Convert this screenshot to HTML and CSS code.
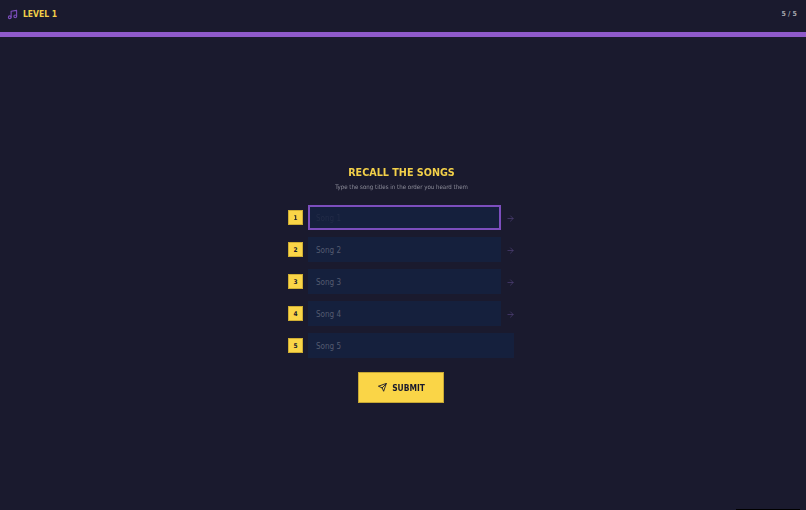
FILE: index.html
```html
<!DOCTYPE html>
<html lang="en">
<head>
<meta charset="utf-8">
<title>Recall the songs</title>
<link rel="stylesheet" href="styles.css">
</head>
<body>
<header class="topbar">
  <div class="level">
    <svg class="music" viewBox="0 0 24 24" fill="none" stroke="currentColor" stroke-width="2.4" stroke-linecap="round" stroke-linejoin="round"><path d="M9 18V5l12-2v13"/><circle cx="6" cy="18" r="3"/><circle cx="18" cy="16" r="3"/></svg>
    <span>LEVEL 1</span>
  </div>
  <div class="count">5 / 5</div>
</header>
<div class="progress"></div>
<main class="stage">
  <h1>RECALL THE SONGS</h1>
  <p class="sub">Type the song titles in the order you heard them</p>
  <div class="rows">
    <div class="row"><span class="num">1</span><div class="field focus">Song 1</div><svg class="arrow" viewBox="0 0 24 24" fill="none" stroke="currentColor" stroke-width="2" stroke-linecap="round" stroke-linejoin="round"><path d="M5 12h14M12 5l7 7-7 7"/></svg></div>
    <div class="row"><span class="num">2</span><div class="field">Song 2</div><svg class="arrow" viewBox="0 0 24 24" fill="none" stroke="currentColor" stroke-width="2" stroke-linecap="round" stroke-linejoin="round"><path d="M5 12h14M12 5l7 7-7 7"/></svg></div>
    <div class="row"><span class="num">3</span><div class="field">Song 3</div><svg class="arrow" viewBox="0 0 24 24" fill="none" stroke="currentColor" stroke-width="2" stroke-linecap="round" stroke-linejoin="round"><path d="M5 12h14M12 5l7 7-7 7"/></svg></div>
    <div class="row"><span class="num">4</span><div class="field">Song 4</div><svg class="arrow" viewBox="0 0 24 24" fill="none" stroke="currentColor" stroke-width="2" stroke-linecap="round" stroke-linejoin="round"><path d="M5 12h14M12 5l7 7-7 7"/></svg></div>
    <div class="row"><span class="num">5</span><div class="field last">Song 5</div></div>
  </div>
  <button class="submit" type="button">
    <svg class="send" viewBox="0 0 24 24" fill="none" stroke="currentColor" stroke-width="2.4" stroke-linecap="round" stroke-linejoin="round"><path d="M22 2 11 13"/><path d="M22 2 15 22l-4-9-9-4z"/></svg>
    <span>SUBMIT</span>
  </button>
</main>
<div class="corner"></div>
</body>
</html>
```
FILE: styles.css
```css
* { box-sizing: border-box; }
html, body { margin: 0; height: 100%; }
body {
  background: #1a1a2e;
  font-family: "DejaVu Sans", sans-serif;
  font-stretch: condensed;
  display: flex;
  flex-direction: column;
  height: 510px;
  overflow: hidden;
  position: relative;
}
.topbar {
  height: 32px;
  flex: none;
  display: flex;
  align-items: center;
  justify-content: space-between;
  padding: 0 9px 4px 7px;
  opacity: 0.99;
}
.level {
  display: flex;
  align-items: center;
  gap: 5px;
  color: #f6d34a;
  font-size: 8.5px;
  font-weight: 700;
}
.music { width: 11px; height: 11px; color: #7e4fc0; }
.count { color: #a8a8b0; font-size: 7px; font-weight: 700; }
.progress { height: 5px; flex: none; background: #8f5acb; }
.stage {
  flex: 1;
  display: flex;
  flex-direction: column;
  align-items: center;
  padding: 129px 3px 0 0;
  opacity: 0.99;
}
h1 {
  margin: 0;
  color: #f6d34a;
  font-size: 10.7px;
  line-height: 14px;
  font-weight: 700;
}
.sub {
  margin: 2px 0 0;
  color: #8f8f9c;
  font-size: 6.1px;
  line-height: 10px;
}
.rows {
  margin-top: 13px;
  width: 227px;
  display: flex;
  flex-direction: column;
  gap: 7px;
}
.row {
  height: 25px;
  display: flex;
  align-items: center;
  gap: 5px;
}
.num {
  width: 15px;
  height: 15px;
  flex: none;
  background: #fdd848;
  border: 1px solid #d2b135;
  color: #1a1a2e;
  font-size: 6.5px;
  font-weight: 700;
  display: flex;
  align-items: center;
  justify-content: center;
  padding-top: 1px;
}
.field {
  width: 193px;
  height: 25px;
  flex: none;
  background: #16213e;
  color: #555c72;
  font-size: 8px;
  display: flex;
  align-items: center;
  padding: 1px 0 0 8px;
}
.field.focus { border: 2px solid #7e4fc0; padding: 1px 0 0 6px; color: #232c48; }
.field.last { width: 206px; }
.arrow { width: 9px; height: 9px; margin-top: 1px; color: #4d3f74; flex: none; }
.submit {
  margin: 14px 1px 0 0;
  width: 86px;
  height: 31px;
  background: #fdd848;
  border: 1px solid #c9a935;
  color: #1a1a2e;
  font-family: inherit;
  font-stretch: inherit;
  font-size: 8.4px;
  font-weight: 700;
  display: flex;
  align-items: center;
  justify-content: center;
  gap: 5px;
  padding: 0 0 0 1px;
}
.send { width: 9px; height: 9px; }
.corner {
  position: absolute;
  left: 736px;
  bottom: 0;
  width: 64px;
  height: 1px;
  background: #000;
}
```
